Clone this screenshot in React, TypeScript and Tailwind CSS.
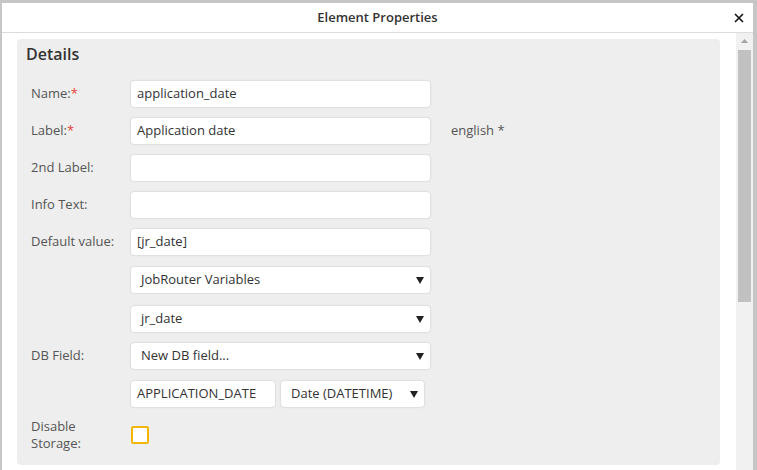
const font = "font-['Open_Sans',_'Noto_Sans',_sans-serif]";

function TextBox({ value = "", width = "w-[299px]" }: { value?: string; width?: string }) {
  return (
    <div
      className={`flex h-[26px] ${width} items-center rounded-[3px] bg-white px-[6px] text-[13px] text-[#333] shadow-[0_0_2px_rgba(0,0,0,0.22)]`}
    >
      {value}
    </div>
  );
}

function Select({ value, width = "w-[299px]" }: { value: string; width?: string }) {
  return (
    <div
      className={`flex h-[26px] ${width} items-center justify-between rounded-[3px] bg-white pl-[10px] pr-[6px] text-[13px] text-[#333] shadow-[0_0_2px_rgba(0,0,0,0.22)]`}
    >
      <span>{value}</span>
      <svg width="8" height="7" viewBox="0 0 8 7">
        <path d="M0 0h8L4 7z" fill="#222" />
      </svg>
    </div>
  );
}

function Row({
  label,
  required,
  mt,
  children,
}: {
  label?: string;
  required?: boolean;
  mt: string;
  children: React.ReactNode;
}) {
  return (
    <div className={`flex items-center ${mt}`}>
      <div className="w-[100px] shrink-0 text-[13px] text-[#555]">
        {label}
        {required && <span className="text-[#e8403a]">*</span>}
      </div>
      {children}
    </div>
  );
}

export default function App() {
  return (
    <div className={`h-[470px] w-[757px] overflow-hidden bg-[#c6c6c6] pl-[2px] pr-[4px] pt-[3px] ${font}`}>
      <div className="flex h-full flex-col bg-white">
        <div className="relative flex h-[30px] shrink-0 items-center justify-center border-b border-[#dcdcdc]">
          <span className="text-[13px] font-semibold text-[#333]">Element Properties</span>
          <svg className="absolute right-[9px] top-[10px]" width="10" height="10" viewBox="0 0 10 10">
            <path d="M1 1l8 8M9 1l-8 8" stroke="#111" strokeWidth="1.6" />
          </svg>
        </div>
        <div className="flex flex-1">
          <div className="flex-1 pl-[15px] pr-[16px] pt-[6px]">
            <div className="h-[426px] rounded-[4px] bg-[#eeeeee] pl-[9px] pt-[4px]">
              <div className="text-[16px] font-semibold leading-[22px] text-[#333]">Details</div>
              <div className="pl-[5px]">
                <Row label="Name:" required mt="mt-[16px]">
                  <TextBox value="application_date" />
                </Row>
                <Row label="Label:" required mt="mt-[11px]">
                  <TextBox value="Application date" />
                  <span className="ml-[21px] text-[13px] text-[#555]">english *</span>
                </Row>
                <Row label="2nd Label:" mt="mt-[11px]">
                  <TextBox />
                </Row>
                <Row label="Info Text:" mt="mt-[11px]">
                  <TextBox />
                </Row>
                <Row label="Default value:" mt="mt-[11px]">
                  <TextBox value="[jr_date]" />
                </Row>
                <Row mt="mt-[12px]">
                  <Select value="JobRouter Variables" />
                </Row>
                <Row mt="mt-[13px]">
                  <Select value="jr_date" />
                </Row>
                <Row label="DB Field:" mt="mt-[11px]">
                  <Select value="New DB field..." />
                </Row>
                <Row mt="mt-[12px]">
                  <TextBox value="APPLICATION_DATE" width="w-[144px]" />
                  <div className="ml-[6px]">
                    <Select value="Date (DATETIME)" width="w-[143px]" />
                  </div>
                </Row>
                <div className="mt-[11px] flex items-center">
                  <div className="w-[100px] shrink-0 text-[13px] leading-[17px] text-[#555]">
                    Disable
                    <br />
                    Storage:
                  </div>
                  <div className="h-[18px] w-[18px] rounded-[2px] border-2 border-[#f2b705] bg-white" />
                </div>
              </div>
            </div>
          </div>
          <div className="flex w-[17px] flex-col items-center bg-[#f1f1f1]">
            <svg className="mt-[6px]" width="7" height="4" viewBox="0 0 7 4">
              <path d="M0 4L3.5 0 7 4z" fill="#a3a3a3" />
            </svg>
            <div className="mt-[7px] h-[252px] w-[13px] bg-[#c1c1c1]" />
          </div>
        </div>
      </div>
    </div>
  );
}
